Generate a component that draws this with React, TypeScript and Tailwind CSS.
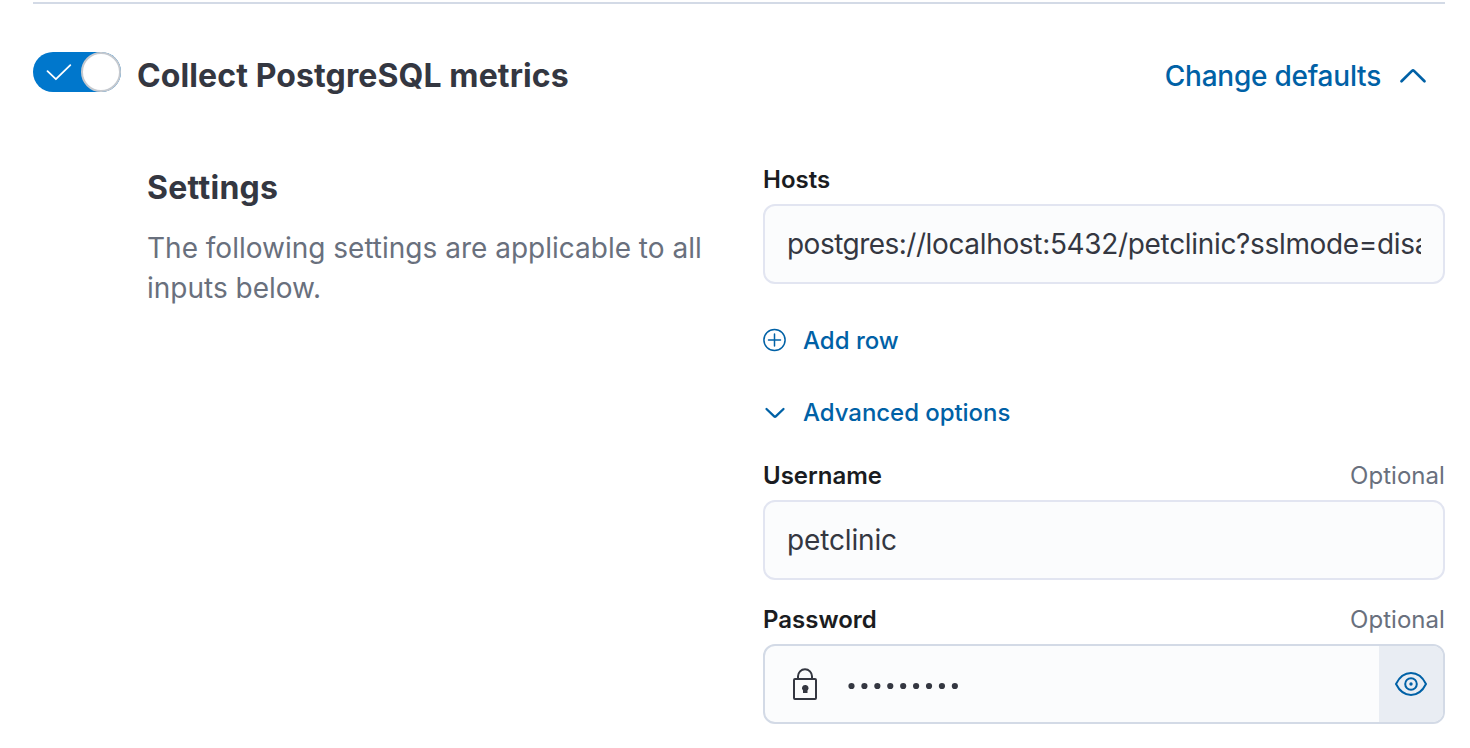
import type { ReactNode } from "react";

function Label({ children, optional }: { children: ReactNode; optional?: boolean }) {
  return (
    <div className="flex h-8 items-center justify-between text-[24px] leading-8">
      <label className="font-semibold text-[#1a1c21]">{children}</label>
      {optional && <span className="tracking-[0.05px] text-[#69707d]">Optional</span>}
    </div>
  );
}

function TextField({ children }: { children: ReactNode }) {
  return (
    <div className="mt-2 flex h-20 items-center rounded-xl border-2 border-[#e2e5f1] bg-[#fbfcfd] px-[22px]">
      <div className="w-full overflow-hidden text-[28px] leading-10 whitespace-nowrap text-[#343741]">{children}</div>
    </div>
  );
}

export default function App() {
  return (
    <div
      className="h-[748px] w-[1470px] overflow-hidden bg-white pt-0.5 pr-[25px] pl-[33px]"
      style={{ fontFamily: 'Inter, "Liberation Sans", sans-serif' }}
    >
      <div className="h-0.5 bg-[#d3dae6]" />
      <header className="mt-12 flex h-10 items-center">
        <button className="flex h-10 w-[88px] items-center justify-between rounded-full bg-[#0077cc]" aria-label="Collect metrics">
          <svg className="ml-[13px] h-[18px] w-[26px]" viewBox="0 0 26 18" fill="none" stroke="white" strokeWidth="1.8" strokeLinecap="round" strokeLinejoin="round">
            <path d="M1.5 8.2 9.9 16.2 24.3 2.2" />
          </svg>
          <span className="size-10 rounded-full border-2 border-[#c5c9cf] bg-white" />
        </button>
        <h2 className="mt-[7px] ml-4 text-[32px] leading-10 font-bold tracking-[0.11px] whitespace-nowrap text-[#343741]">Collect PostgreSQL metrics</h2>
        <button className="mt-2 mr-[18px] ml-auto flex items-center gap-[18px] text-[28px] leading-10 font-medium tracking-[-0.24px] whitespace-nowrap text-[#0061a6]">
          Change defaults
          <svg className="h-4 w-7" viewBox="0 0 28 16" fill="none" stroke="currentColor" strokeWidth="2.7" strokeLinecap="round" strokeLinejoin="round">
            <path d="M2.5 13.3 13 2.9Q14 2 15 2.9L25.500 13.3" />
          </svg>
        </button>
      </header>

      <main className="mt-[72px] flex justify-between">
        <section className="ml-[114px] w-[580px] pt-1">
          <h3 className="text-[32px] leading-10 font-bold tracking-[0.28px] text-[#343741]">Settings</h3>
          <p className="mt-5 text-[28px] leading-10 text-[#69707d]">The following settings are applicable to all inputs below.</p>
        </section>

        <section className="w-[682px]">
          <Label>Hosts</Label>
          <TextField>
            <span className="tracking-[-0.52px]">postgres://</span>
            <span className="tracking-[-0.33px]">localhost:5432/petclinic?sslmode=disable</span>
          </TextField>

          <button className="mt-[41px] flex h-8 items-center gap-4 text-[24px] leading-8 font-medium text-[#0061a6]">
            <svg className="mb-[3px] size-6" viewBox="0 0 24 24" fill="none" stroke="currentColor" strokeWidth="1.5" strokeLinecap="round">
              <circle cx="11.5" cy="12" r="10.6" />
              <path d="M11.5 6v12M5.5 12h12" />
            </svg>
            Add row
          </button>
          <button className="mt-10 flex h-8 items-center gap-4 text-[24px] leading-8 font-medium tracking-[-0.05px] text-[#0061a6]">
            <svg className="mb-px size-6" viewBox="0 0 24 24" fill="none" stroke="currentColor" strokeWidth="2.3" strokeLinecap="round" strokeLinejoin="round">
              <path d="M3.5 8 11.2 15.4Q12 16.2 12.8 15.4L20.5 8" />
            </svg>
            Advanced options
          </button>

          <div className="mt-[31px]">
            <Label optional>Username</Label>
            <TextField>
              <span className="tracking-[-0.15px]">petclinic</span>
            </TextField>
          </div>

          <div className="mt-6">
            <Label optional>Password</Label>
            <div className="mt-2 flex h-20 overflow-hidden rounded-xl border-2 border-[#d3dae6] bg-[#fbfcfd]">
              <div className="flex flex-1 items-center pl-[27px]">
                <svg className="h-8 w-[26px]" viewBox="0 0 26 32" fill="none" stroke="#343741" strokeWidth="2">
                  <path d="M6 11V8.3a7 7 0 0 1 14 0V11" />
                  <rect x="2" y="11" width="22" height="20" rx="1" />
                  <path d="M13 17a3.100 3.100 0 0 0-2 5.400V25h4.500v-2.600A3.100 3.100 0 0 0 13 17Z" fill="#343741" stroke="none" />
                </svg>
                <svg className="mt-[3px] ml-[30px] h-2 w-[114px]" viewBox="0 0 114 8" fill="#343741">
                  {Array.from({ length: 9 }, (_, i) => (
                    <circle key={i} cx={3.5 + i * 12.92} cy={4} r={3.1} />
                  ))}
                </svg>
              </div>
              <button className="flex w-16 items-center justify-center bg-[#e9edf3] text-[#0061a6]" aria-label="Show password">
                <svg className="h-6 w-8" viewBox="0 0 32 24" fill="none" stroke="currentColor" strokeWidth="2">
                  <path d="M1 12C4.500 5 9.800 1.100 16 1.100S27.500 5 31 12C27.500 19 22.200 22.900 16 22.900S4.500 19 1 12Z" strokeLinejoin="round" />
                  <circle cx="16" cy="12" r="5.800" />
                  <circle cx="16" cy="12" r="1.700" fill="currentColor" stroke="none" />
                </svg>
              </button>
            </div>
          </div>
        </section>
      </main>
    </div>
  );
}
